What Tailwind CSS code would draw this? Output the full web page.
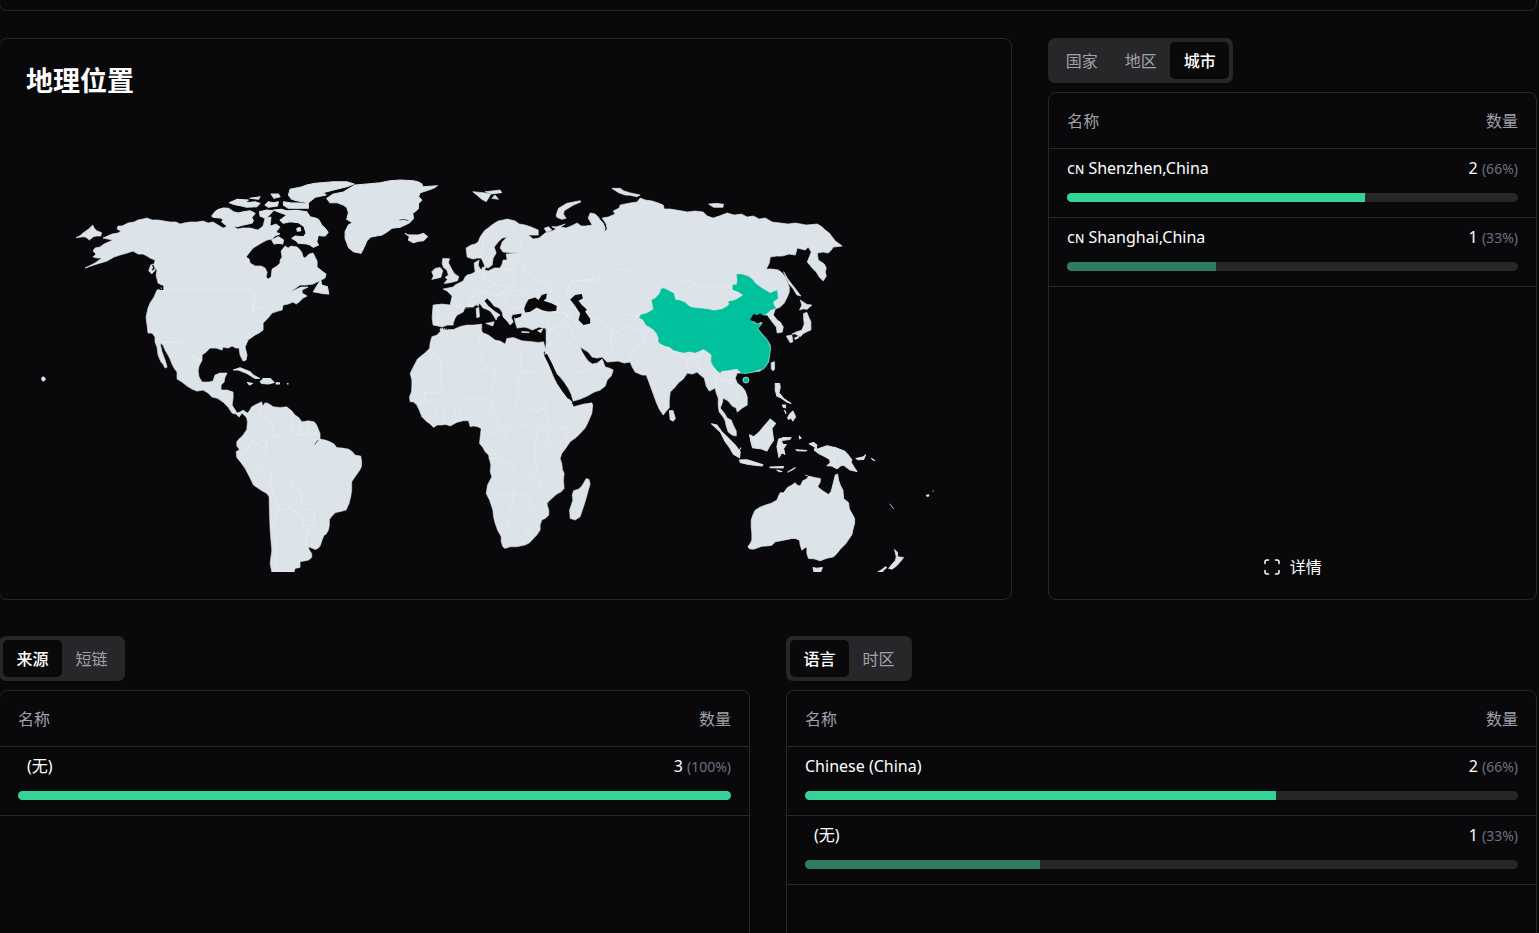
<!DOCTYPE html>
<html lang="zh-CN">
<head>
    <meta charset="UTF-8">
    <meta name="viewport" content="width=device-width, initial-scale=1.0">
    <title>地理位置</title>
    <script src="https://cdn.jsdelivr.net/npm/@tailwindcss/browser@4"></script>
</head>
<body class="bg-[#09090b] text-white text-base font-['Noto_Sans','Noto_Sans_CJK_SC',sans-serif]">
    <div class="h-screen overflow-hidden">
        <main class="-ml-px mr-0.5">
            <!-- End of the previous card -->
            <div class="h-[11px] rounded-b-lg border border-t-0 border-[#27272a]"></div>

            <!-- Map and places -->
            <div class="mt-[27px] grid grid-cols-3 gap-9">
                <section class="col-span-2 rounded-lg border border-[#27272a] px-[26px] pt-7 pb-[27px]">
                    <h2 class="text-[27px] leading-7 font-bold">地理位置</h2>
                    <svg class="mt-[17px] block w-full overflow-hidden" viewBox="26 112 959 460" fill="#dce3e9" stroke="#dce3e9" stroke-width=".7" stroke-linejoin="round" role="img" aria-label="地理位置">
                        <!-- North America -->
                        <path d="M118,226L122,226 128,223 134,222 138,220 143,219 147,218 152,220 158,220 164,221 170,222 176,222 180,224 184,223 190,222 197,222 203,221 208,223 213,222 218,225 223,228 228,226 233,227 238,229 242,228 250,228 258,230 263,226 265,218 271,217 270,226 276,224 280,227 276,232 280,234 275,236 272,239 267,240 263,242 258,245 253,248 249,253 246,257 249,259 250,263 255,266 261,266 265,268 267,272 266,277 268,279 271,277 272,269 277,266 280,263 280,260 282,257 281,251 285,246 288,248 291,246 297,247 300,250 302,253 303,257 305,258 309,254 313,253 315,257 317,261 317,267 322,271 326,274 325,278 319,281 313,284 306,285 300,285 290,292 277,298 290,292 301,287 308,287 302,290 302,293 307,296 303,298 299,302 296,304 293,302 288,304 283,305 282,310 278,311 272,313 268,318 263,323 263,330 259,333 255,335 248,340 245,347 247,355 246,360 243,361 240,355 239,348 236,348 232,346 228,348 223,347 222,350 216,348 210,348 206,352 202,355 202,360 199,366 198,371 199,377 202,382 209,382 213,381 215,375 220,373 227,373 225,377 224,382 221,385 221,390 227,390 233,392 233,398 232,405 237,413 240,412 243,410 247,413 250,412 247,418 242,413 239,417 236,414 232,413 228,407 223,402 217,398 212,397 208,393 203,390 197,391 192,389 187,386 182,382 177,379 177,372 174,368 172,364 170,359 168,355 165,350 163,345 160,343 162,352 165,360 167,367 165,368 163,364 161,362 158,355 157,347 155,342 155,337 152,333 148,333 147,325 146,317 148,308 150,303 154,297 157,290 161,289 163,286 158,283 157,279 156,275 157,270 154,266 155,260 150,258 147,256 143,254 138,254 133,251 127,253 120,255 114,257 107,261 97,264 85,268 95,263 102,258 98,258 93,257 96,254 93,251 95,248 100,247 104,244 113,240 103,238 112,234 118,233 121,231 117,229Z"/>
                        <path d="M147,249L172,224M163,288H250L255,292 254,300 252,310 262,307M163,342L182,342 188,349 195,358 202,361M216,398L222,392" fill="none" stroke="#f5f5f5" stroke-dasharray="3 1"/>
                        <!-- Europe and Asia -->
                        <path d="M433,305L442,304 450,305 452,296 447,291 443,289 453,287 455,285 459,283 463,281 465,277 467,275 471,274 475,272 474,263 479,260 478,265 480,269 488,271 494,268 500,268 502,264 503,260 507,260 506,254 517,253 503,252 500,248 502,242 507,237 502,238 498,242 494,247 496,253 493,258 492,265 488,268 485,267 483,262 481,258 477,258 473,259 467,257 466,248 471,245 475,244 478,242 480,237 482,234 485,230 488,228 493,224 498,221 503,220 507,219 511,220 515,221 519,224 525,225 531,227 538,230 538,235 528,235 533,239 539,238 545,233 552,231 560,227 566,228 571,226 577,223 581,226 585,226 592,225 588,218 590,213 595,214 598,217 600,220 603,223 605,228 604,232 607,229 606,224 602,218 608,217 615,214 613,211 619,208 620,205 625,204 630,203 637,202 640,198 645,200 652,201 658,203 663,205 664,209 670,209 676,210 682,211 687,212 695,211 703,212 707,216 713,218 719,216 727,213 734,215 741,214 747,217 753,216 759,219 765,218 772,222 780,223 788,224 795,223 806,225 817,224 822,227 825,230 829,233 832,237 835,241 842,246 833,247 831,250 828,253 823,252 817,253 818,260 824,264 826,268 825,272 826,276 823,281 819,277 816,272 812,268 807,262 811,252 808,247 805,250 797,248 795,255 789,254 782,256 776,256 770,257 769,263 766,269 772,269 778,270 782,273 785,277 787,282 789,287 789,292 787,297 784,303 780,307 775,309 773,315 777,320 780,322 783,327 782,332 777,333 776,327 772,322 767,315 760,315 750,320 762,323 757,328 770,345 768,362 760,371 743,373 737,373 735,378 737,383 742,387 745,391 747,397 747,405 742,408 737,412 736,408 732,406 728,401 723,398 722,403 720,408 724,413 727,418 731,420 733,425 736,431 736,436 732,435 728,432 726,426 725,421 723,417 719,412 718,406 718,398 716,393 715,388 709,391 706,386 704,378 700,375 697,372 692,374 687,373 683,379 678,383 674,388 670,392 669,400 669,408 666,411 663,415 659,409 656,402 652,391 648,380 646,375 642,375 635,372 632,367 630,362 624,363 618,361 607,362 602,357 597,358 592,357 588,352 580,347 582,352 585,357 588,361 592,364 597,363 602,359 605,367 609,368 613,370 611,376 607,380 605,386 600,390 594,392 587,396 580,399 573,401 571,394 568,388 564,382 560,377 554,371 550,365 547,359 545,353 546,343 546,328 542,328 539,327 532,330 528,328 524,327 517,328 515,322 514,315 513,314 511,317 513,322 510,325 507,321 503,317 502,312 499,308 494,306 490,301 487,298 484,301 488,306 494,311 500,315 497,317 496,320 493,315 490,311 486,309 483,308 480,304 478,303 473,307 465,307 463,312 457,315 455,318 453,323 453,325 447,325 442,327 438,326 433,325 432,318Z"/>

                        <g transform="translate(30 170) scale(.3333)" stroke-width="2">
                            <path d="M138,203L150,197 160,188 175,178 188,165 193,175 200,182 208,185 215,188 212,198 200,198 190,200 178,210 168,202 160,200ZM35,622L42,620 47,628 40,634 35,630ZM356,302L362,285 375,280 376,300 365,312Z"/>
                            <path d="M368,285L372,295 366,300M385,345L398,348 398,358 388,358" fill="none" stroke="#09090b" stroke-width="4"/>
                        </g>

                        <!-- Arctic Canada, Greenland, Iceland, Caribbean -->
                        <g transform="translate(200 170) scale(.3333)" stroke-width="3">
                            <path d="M35,138L45,125 55,118 70,114 85,115 100,125 115,129 130,125 150,122 165,130 155,142 160,152 155,160 130,165 110,170 85,172 65,155 70,150 65,145 40,142ZM88,98L110,88 145,90 135,98 165,95 180,100 170,110 140,112 125,108 105,104ZM195,105L205,95 220,98 235,95 232,108 205,112ZM150,85L180,80 175,88ZM213,72L235,72 240,80 222,85ZM250,95L270,98 325,100 325,115 265,115 250,105ZM178,125L200,120 220,122 205,138 195,145 180,138Z"/>
                            <path d="M220,120L245,118 260,122 290,121 320,125 330,140 350,145 358,152 365,165 375,175 384,187 375,198 365,198 355,195 350,215 355,225 340,232 330,225 320,222 295,220 288,212 275,205 285,198 310,200 318,190 312,170 295,158 270,155 250,160 240,150 260,135 245,130ZM290,175L300,172 302,182 292,184ZM215,210L235,200 250,210 248,222 235,220 222,222Z"/>
                            <path d="M265,75L270,58 285,55 300,52 320,45 345,40 400,35 440,35 462,42 440,50 400,60 368,68 378,75 345,82 325,98 290,92 275,88ZM380,85L400,72 430,66 465,45 500,42 540,38 570,32 600,30 640,32 655,36 665,42 668,50 712,47 700,55 685,60 660,68 655,80 665,90 655,100 655,115 648,122 638,130 640,145 628,158 600,172 575,175 560,186 545,195 528,198 510,202 500,213 495,225 488,240 482,250 460,245 445,232 440,218 435,205 435,185 445,165 458,158 440,148 445,128 440,112 430,105 412,98 390,98ZM615,190L622,194 640,195 655,195 670,190 682,200 670,212 655,214 640,218 625,210 628,200Z"/>
                            <path d="M340,365L352,345 362,330 365,345 382,350 386,372 365,370ZM100,600L120,593 150,605 160,615 178,625 165,625 140,610 115,600ZM180,635L190,625 210,625 222,637 205,642 185,640ZM142,637L158,640 148,645ZM228,638h10v4h-10ZM262,640h2v2h-2Z"/>
                            <path d="M598,150L612,148 625,152" fill="none" stroke="#09090b" stroke-width="2"/>
                        </g>

                        <!-- South America -->
                        <g transform="translate(220 370) scale(.3333)" stroke-width="1.5">
                            <path d="M78,135L88,122 95,110 110,102 125,95 128,108 135,98 145,100 160,110 180,112 200,110 215,122 225,135 236,142 245,155 265,152 282,155 288,162 292,170 300,190 300,207 316,210 330,215 342,222 350,232 368,234 385,237 397,245 405,255 422,258 425,275 424,290 418,302 412,310 403,323 395,335 395,360 392,380 387,400 378,420 362,424 345,428 336,438 328,448 328,465 325,480 318,492 312,495 306,510 300,528 292,536 285,538 265,530 268,540 275,550 275,562 265,570 240,575 240,592 225,595 222,606 155,606 150,580 155,540 150,480 148,430 147,380 140,370 125,362 112,353 100,345 88,320 75,295 62,277 50,262 48,245 58,238 50,228 50,215 58,205 65,200 72,190 80,178 82,155Z"/>
                            <path d="M125,110L120,125 122,135 138,146 155,155 160,175 160,200 185,195 190,180 215,180 225,195 230,195 285,190M215,180L212,165 220,140M240,155L235,190M265,155L260,190M65,200L80,200 95,212 110,220 120,232 138,235 140,200 160,200M60,260L65,240 85,235 95,212M138,245L120,260 112,275 118,300 135,298 155,312 165,300 180,318 215,330 220,350 240,360 245,375 245,400 230,388 215,390 205,415 175,420 165,395 160,370 150,340 155,312M175,420L165,445 160,470 168,505 165,540 170,570 165,600M205,415L230,425 250,440 250,465 275,465 285,450 280,420 250,415 245,400M280,465L262,485 258,505 260,530M265,490L285,500 298,515" fill="none" stroke="#f5f5f5" stroke-width="2" stroke-dasharray="4 2"/>
                            <path d="M284,223L294,210" fill="none" stroke="#09090b" stroke-width="2"/>
                        </g>

                        <!-- Africa -->
                        <g transform="translate(400 320) scale(.3333)" stroke-width="1.5">
                            <path d="M120,25L140,30 160,28 180,19 200,15 220,15 245,12 243,30 248,38 258,42 265,45 285,60 300,63 315,72 320,55 340,52 365,62 390,64 415,67 430,65 437,90 430,98 440,120 450,145 460,170 470,190 485,212 500,230 515,245 520,260 550,252 575,248 578,255 575,280 568,297 562,310 555,324 545,335 528,352 510,365 498,383 485,400 480,415 485,430 487,448 492,460 490,480 492,505 482,516 470,522 450,540 440,550 446,570 446,585 435,595 425,600 420,615 420,630 410,645 400,655 388,668 375,675 350,680 330,680 315,685 308,680 303,665 303,650 292,630 285,610 280,590 278,570 268,540 258,520 262,495 275,470 270,455 272,435 265,405 255,395 248,382 238,370 240,350 243,325 232,320 220,318 210,320 205,302 190,302 170,307 150,318 137,313 125,315 112,315 100,322 90,312 80,305 65,290 58,272 50,255 40,246 30,245 28,230 34,215 35,195 35,180 30,160 37,145 45,130 52,117 60,110 75,98 88,85 90,68 95,50 110,45 120,35ZM558,475L567,478 570,492 566,505 555,545 540,590 525,600 510,595 508,570 518,540 516,525 520,512 535,507 545,498Z"/>
                            <path d="M436,103L450,130 466,165 478,190 492,212 508,234" fill="none" stroke="#09090b" stroke-width="10"/>
                            <path d="M515,250L540,248 572,244" fill="none" stroke="#09090b" stroke-width="3"/>
                            <path d="M158,30L155,60 125,80 95,100 95,118 75,115 50,120M95,100L145,140 195,180 230,155 265,142 285,148 280,200 270,235 235,238 215,230 195,235 180,250M240,30L238,80 248,110 245,125 265,142M285,148L320,155 355,175 355,225 345,260 315,285 285,290 275,240M360,62L360,175M362,155L455,155M120,125L125,218 75,218 50,210M75,218L75,245 50,255M75,245L95,240 110,240 120,258 135,255 150,240 165,230 180,225 195,235M110,260L105,280 100,300M135,260L135,315M165,260L170,305M180,255L182,300M275,240L270,265 260,290 240,300 238,320M350,260L365,270 395,268 410,275 430,265 440,230 460,200 485,220M350,270L365,290 390,310 415,320 440,310 445,295 430,265M245,340L265,335 285,340 300,320 285,290M285,340L320,320 355,320 390,310M320,320L310,360 300,385 290,402 265,405M265,415L300,415 305,432 340,430 345,465 375,465 400,480 410,450 405,400 405,370 415,320M415,325L445,330 440,370 410,370M440,370L480,395M440,310L465,325 495,325 500,360M495,325L520,315 555,290 520,265M268,520L340,525 380,525 400,505 420,500 425,470 455,460 485,465M340,490L340,525 330,570 322,625 300,625M325,600L340,605 370,590 395,572 420,560 445,550M380,525L395,570M375,630L390,625 390,645 378,645Z" fill="none" stroke="#f2f2f2" stroke-width="2" stroke-dasharray="4 2"/>
                        </g>

                        <!-- European islands and inner seas -->
                        <g transform="translate(400 180) scale(.3333)" stroke-width="2">
                            <path d="M128,235L148,236 145,248 152,262 162,280 176,290 172,302 150,308 132,310 142,298 135,292 145,285 140,270 130,262 126,250ZM95,275L105,265 120,262 128,272 122,292 95,298 100,288ZM218,35L250,38 272,42 265,55 258,65 245,58ZM255,35L300,30 305,38 275,42ZM275,55L285,45 295,58ZM468,105L475,85 500,70 540,62 542,66 520,75 492,92 490,103 498,115 485,118 470,112ZM432,145L445,140 455,150 440,157ZM455,140L470,140 495,132 470,148ZM228,385L236,382 238,410 230,413ZM230,366L236,368 235,378 230,376ZM257,430L282,425 278,438ZM365,454L388,456 386,458 365,457ZM412,452L428,446 422,458ZM246,262L256,260 254,272 246,270Z"/>
                            <path d="M372,385L378,370 385,358 405,352 415,360 425,345 440,340 438,355 430,362 455,370 470,378 468,392 445,395 425,390 410,382 390,395 375,397ZM510,358L525,345 545,342 548,355 535,362 545,375 560,388 555,395 570,415 570,430 550,435 535,420 540,400 525,378ZM338,405L365,400 362,410 345,415Z" fill="#09090b" stroke="none"/>
                            <path d="M200,290L225,320 245,335 215,350 205,385M160,375L200,385M115,380L112,430M330,120L340,145 350,160 365,185 355,215M265,155L250,180 245,215 240,235M320,240L355,225M305,265L335,270 345,300 335,320 290,315 250,295 250,275M355,230L375,270 400,295 445,310 450,335M245,335L290,345 335,330 375,335 380,350M290,345L310,375 335,385 375,380M340,270L350,240M320,345L315,370M500,335L510,310 545,300 590,305M440,395L500,400 490,430 440,455 440,485M470,385L510,415M445,420L435,450M500,430L530,480M245,440L245,460M125,445L160,450" fill="none" stroke="#f5f5f5" stroke-width="2" stroke-dasharray="4 2"/>
                        </g>

                        <!-- Asian borders, China, Japan, Russian islands -->
                        <g transform="translate(540 180) scale(.3333)" stroke-width="2">
                            <path d="M80,330L95,305 135,298 175,300 180,280 225,265 260,272 295,290 330,315 365,325M380,320L410,308 440,300 475,318 515,320 550,318 580,320M150,370L175,360 210,385 260,405 300,410M145,410L175,420 200,440 215,455 235,455 265,435 300,450 320,440M215,455L212,490 220,510 235,540M320,450L310,470 315,480 280,510 265,540M375,500L405,520 440,535 480,530 490,510M440,535L445,570M470,540L480,570M520,560L530,590 560,600 580,620M75,395L85,410 105,425 120,470M25,500L40,470 60,460 80,485 110,500M110,580L145,570 180,560 190,545M680,400L705,385" fill="none" stroke="#f5f5f5" stroke-width="2" stroke-dasharray="4 2"/>
                            <path d="M590,283L605,283 625,290 636,298 645,310 665,325 678,332 690,340 700,335 710,332 712,355 698,365 700,375 706,384 690,390 680,400 665,408 650,402 632,418 645,430 665,430 658,438 652,447 665,460 676,472 685,485 691,505 688,525 685,545 678,558 670,567 655,570 630,578 610,580 600,575 590,565 575,568 565,570 545,572 540,578 528,568 520,558 513,545 515,525 503,515 490,507 478,512 465,517 448,514 430,517 400,510 388,500 375,497 360,490 355,485 356,475 350,460 340,448 328,440 318,435 310,420 298,412 302,405 320,400 340,388 338,375 335,360 345,355 355,345 362,335 362,328 370,325 385,332 400,340 405,360 420,362 435,368 445,378 455,383 485,386 505,388 520,392 545,388 560,380 568,372 565,365 580,362 590,358 610,345 595,335 578,328 578,315 590,315 592,300Z" fill="#00c19c" stroke="#00c19c"/>
                            <path d="M632,418L645,430 665,430 652,447 685,485 691,505 685,545 670,567 655,570 630,578 610,580" fill="none" stroke="#b5ded8" stroke-width="1.5"/>
                            <circle cx="617" cy="600" r="9" fill="#00c19c"/>
                            <path d="M629,420L640,402 650,405 660,400 675,410 655,416 660,427 650,430 642,424Z" fill="#09090b" stroke="none"/>
                            <path d="M738,468L755,465 758,485 750,488ZM755,462L770,455 785,450 792,432 790,415 790,400 800,397 806,412 812,425 812,450 800,455 790,460 780,470 765,462ZM762,474L776,468 775,474 765,478ZM778,390L785,375 780,360 800,373 815,375 800,388 790,386ZM730,275L745,300 765,325 782,348 770,345 758,325 745,310ZM693,548L703,545 703,568 697,572 693,565ZM215,25L240,25 250,32 268,38 300,45 290,50 270,46 255,45 235,38ZM505,72L530,70 550,73 548,82 520,82Z"/>
                        </g>

                        <!-- South-east Asia -->
                        <g transform="translate(620 330) scale(.3333)" stroke-width="3">
                            <path d="M465,160L478,160 480,172 476,188 490,205 512,220 500,216 480,202 470,198 465,180ZM486,225L496,225 496,233 490,232ZM491,240L497,246 496,252M502,262L510,250 518,243 526,260 518,273 512,264 505,268ZM148,242L158,242 165,265 158,273 150,268ZM274,281L290,285 305,305 325,325 345,345 360,365 358,383 340,373 328,352 315,335 300,305ZM357,363L362,352M358,390L380,389 400,395 428,404 425,408 385,403 360,397ZM388,314L400,320 415,308 430,290 450,267 466,280 455,295 460,330 450,345 440,363 425,357 397,353 392,335ZM475,327L490,322 513,323 508,328 483,331 488,343 498,343 490,355 494,373 485,368 476,382 470,350ZM449,411L490,409 488,414 451,413ZM502,426L525,413 515,420ZM470,420L485,424 478,425ZM537,318L543,324 538,326ZM527,359L560,361 553,363 532,362ZM567,341L580,337 590,345 588,358 605,352 620,347 650,354 673,363 685,376 695,390 692,396 702,412 710,424 690,420 670,405 660,408 650,416 635,408 620,407 630,398 628,388 615,380 598,372 582,360 585,352ZM707,385L730,380 736,374 730,388 715,389ZM754,385L763,391 758,389Z"/>
                            <path d="M280,130L290,160 330,150 350,180 355,210M325,125L340,155M390,322L420,325 435,312 450,295M643,350V410M285,160L300,200" fill="none" stroke="#f5f5f5" stroke-width="2" stroke-dasharray="4 2"/>
                        </g>

                        <!-- Australia and New Zealand -->
                        <g transform="translate(700 440) scale(.3333)" stroke-width="2.5">
                            <path d="M143,320L150,310 155,300 155,280 153,260 153,240 158,225 165,210 180,201 195,195 212,190 230,180 235,168 240,158 250,158 262,142 275,135 285,128 290,135 300,138 308,122 320,116 325,108 345,113 360,115 360,125 352,140 368,153 385,163 392,155 395,145 400,125 405,105 412,102 415,120 420,135 428,150 430,175 445,188 447,205 452,215 463,235 463,250 458,268 455,283 445,298 435,312 420,327 408,342 400,350 380,354 360,362 342,356 325,355 320,340 320,320 312,324 305,330 300,315 298,300 285,295 275,295 250,300 225,305 215,315 205,317 185,318 160,327 148,326ZM315,105L323,107M338,382L350,384 367,382 360,398 342,400ZM583,328L592,337 592,350 610,352 600,365 588,378 575,387 565,385 575,372 585,362 588,350ZM532,396L545,388 555,380 560,382 550,390 545,400ZM568,191L580,206M678,165l8,-1 0,4 -6,1ZM696,154l4,-2"/>
                        </g>
                    </svg>
                </section>

                <section class="flex flex-col">
                    <div class="flex self-start rounded-[7px] bg-[#27272a] p-1 text-[#a1a1aa]" role="tablist">
                        <button type="button" role="tab" class="h-[37px] min-w-[59px] rounded-[5px]">国家</button>
                        <button type="button" role="tab" class="h-[37px] min-w-[59px] rounded-[5px]">地区</button>
                        <button type="button" role="tab" aria-selected="true" class="h-[37px] min-w-[59px] rounded-[5px] bg-[#09090b] font-medium text-white">城市</button>
                    </div>
                    <div class="mt-[9px] flex flex-1 flex-col justify-between rounded-lg border border-[#27272a]">
                        <table class="w-full border-separate border-spacing-0">
                            <thead>
                                <tr class="h-14 text-[#a1a1aa]">
                                    <th class="border-b border-[#27272a] pl-[18px] text-left font-normal">名称</th>
                                    <th class="border-b border-[#27272a] pr-[18px] text-right font-normal">数量</th>
                                </tr>
                            </thead>
                            <tbody>
                                <tr>
                                    <td class="pt-[7px] pl-[18px]"><span class="text-xs font-medium">CN</span> Shenzhen,China</td>
                                    <td class="pt-[7px] pr-[18px] text-right">2 <span class="text-sm text-[#6b7280]">(66%)</span></td>
                                </tr>
                                <tr>
                                    <td colspan="2" class="border-b border-[#27272a] px-[18px] pt-[13px] pb-[15px]">
                                        <div class="h-[9px] overflow-hidden rounded-full bg-[#27272a]"><div class="h-full bg-[#36d399]" style="width: 66%"></div></div>
                                    </td>
                                </tr>
                                <tr>
                                    <td class="pt-[7px] pl-[18px]"><span class="text-xs font-medium">CN</span> Shanghai,China</td>
                                    <td class="pt-[7px] pr-[18px] text-right">1 <span class="text-sm text-[#6b7280]">(33%)</span></td>
                                </tr>
                                <tr>
                                    <td colspan="2" class="border-b border-[#27272a] px-[18px] pt-[13px] pb-[15px]">
                                        <div class="h-[9px] overflow-hidden rounded-full bg-[#27272a]"><div class="h-full bg-[#307c60]" style="width: 33%"></div></div>
                                    </td>
                                </tr>
                            </tbody>
                        </table>
                        <button type="button" class="mb-3 flex h-10 items-center justify-center gap-2.5">
                            <svg class="size-4" viewBox="0 0 16 16" fill="none" stroke="currentColor" stroke-width="1.5" stroke-linecap="round"><path d="M1,4.5V3Q1,1 3,1H4.5M11.5,1H13Q15,1 15,3V4.5M15,11.5V13Q15,15 13,15H11.5M4.5,15H3Q1,15 1,13V11.5"/></svg>
                            详情
                        </button>
                    </div>
                </section>
            </div>

            <!-- Sources and languages -->
            <div class="mt-9 grid grid-cols-2 gap-9">
                <section class="flex flex-col">
                    <div class="flex self-start rounded-[7px] bg-[#27272a] p-1 text-[#a1a1aa]" role="tablist">
                        <button type="button" role="tab" aria-selected="true" class="h-[37px] min-w-[59px] rounded-[5px] bg-[#09090b] font-medium text-white">来源</button>
                        <button type="button" role="tab" class="h-[37px] min-w-[59px] rounded-[5px]">短链</button>
                    </div>
                    <div class="mt-[9px] min-h-[508px] rounded-lg border border-[#27272a]">
                        <table class="w-full border-separate border-spacing-0">
                            <thead>
                                <tr class="h-14 text-[#a1a1aa]">
                                    <th class="border-b border-[#27272a] pl-[18px] text-left font-normal">名称</th>
                                    <th class="border-b border-[#27272a] pr-[18px] text-right font-normal">数量</th>
                                </tr>
                            </thead>
                            <tbody>
                                <tr>
                                    <td class="pt-[7px] pl-[27px]">(无)</td>
                                    <td class="pt-[7px] pr-[18px] text-right">3 <span class="text-sm text-[#6b7280]">(100%)</span></td>
                                </tr>
                                <tr>
                                    <td colspan="2" class="border-b border-[#27272a] px-[18px] pt-[13px] pb-[15px]">
                                        <div class="h-[9px] overflow-hidden rounded-full bg-[#27272a]"><div class="h-full bg-[#36d399]" style="width: 100%"></div></div>
                                    </td>
                                </tr>
                            </tbody>
                        </table>
                    </div>
                </section>

                <section class="flex flex-col">
                    <div class="flex self-start rounded-[7px] bg-[#27272a] p-1 text-[#a1a1aa]" role="tablist">
                        <button type="button" role="tab" aria-selected="true" class="h-[37px] min-w-[59px] rounded-[5px] bg-[#09090b] font-medium text-white">语言</button>
                        <button type="button" role="tab" class="h-[37px] min-w-[59px] rounded-[5px]">时区</button>
                    </div>
                    <div class="mt-[9px] min-h-[508px] rounded-lg border border-[#27272a]">
                        <table class="w-full border-separate border-spacing-0">
                            <thead>
                                <tr class="h-14 text-[#a1a1aa]">
                                    <th class="border-b border-[#27272a] pl-[18px] text-left font-normal">名称</th>
                                    <th class="border-b border-[#27272a] pr-[18px] text-right font-normal">数量</th>
                                </tr>
                            </thead>
                            <tbody>
                                <tr>
                                    <td class="pt-[7px] pl-[18px]">Chinese (China)</td>
                                    <td class="pt-[7px] pr-[18px] text-right">2 <span class="text-sm text-[#6b7280]">(66%)</span></td>
                                </tr>
                                <tr>
                                    <td colspan="2" class="border-b border-[#27272a] px-[18px] pt-[13px] pb-[15px]">
                                        <div class="h-[9px] overflow-hidden rounded-full bg-[#27272a]"><div class="h-full bg-[#36d399]" style="width: 66%"></div></div>
                                    </td>
                                </tr>
                                <tr>
                                    <td class="pt-[7px] pl-[27px]">(无)</td>
                                    <td class="pt-[7px] pr-[18px] text-right">1 <span class="text-sm text-[#6b7280]">(33%)</span></td>
                                </tr>
                                <tr>
                                    <td colspan="2" class="border-b border-[#27272a] px-[18px] pt-[13px] pb-[15px]">
                                        <div class="h-[9px] overflow-hidden rounded-full bg-[#27272a]"><div class="h-full bg-[#307c60]" style="width: 33%"></div></div>
                                    </td>
                                </tr>
                            </tbody>
                        </table>
                    </div>
                </section>
            </div>
        </main>
    </div>
</body>
</html>
